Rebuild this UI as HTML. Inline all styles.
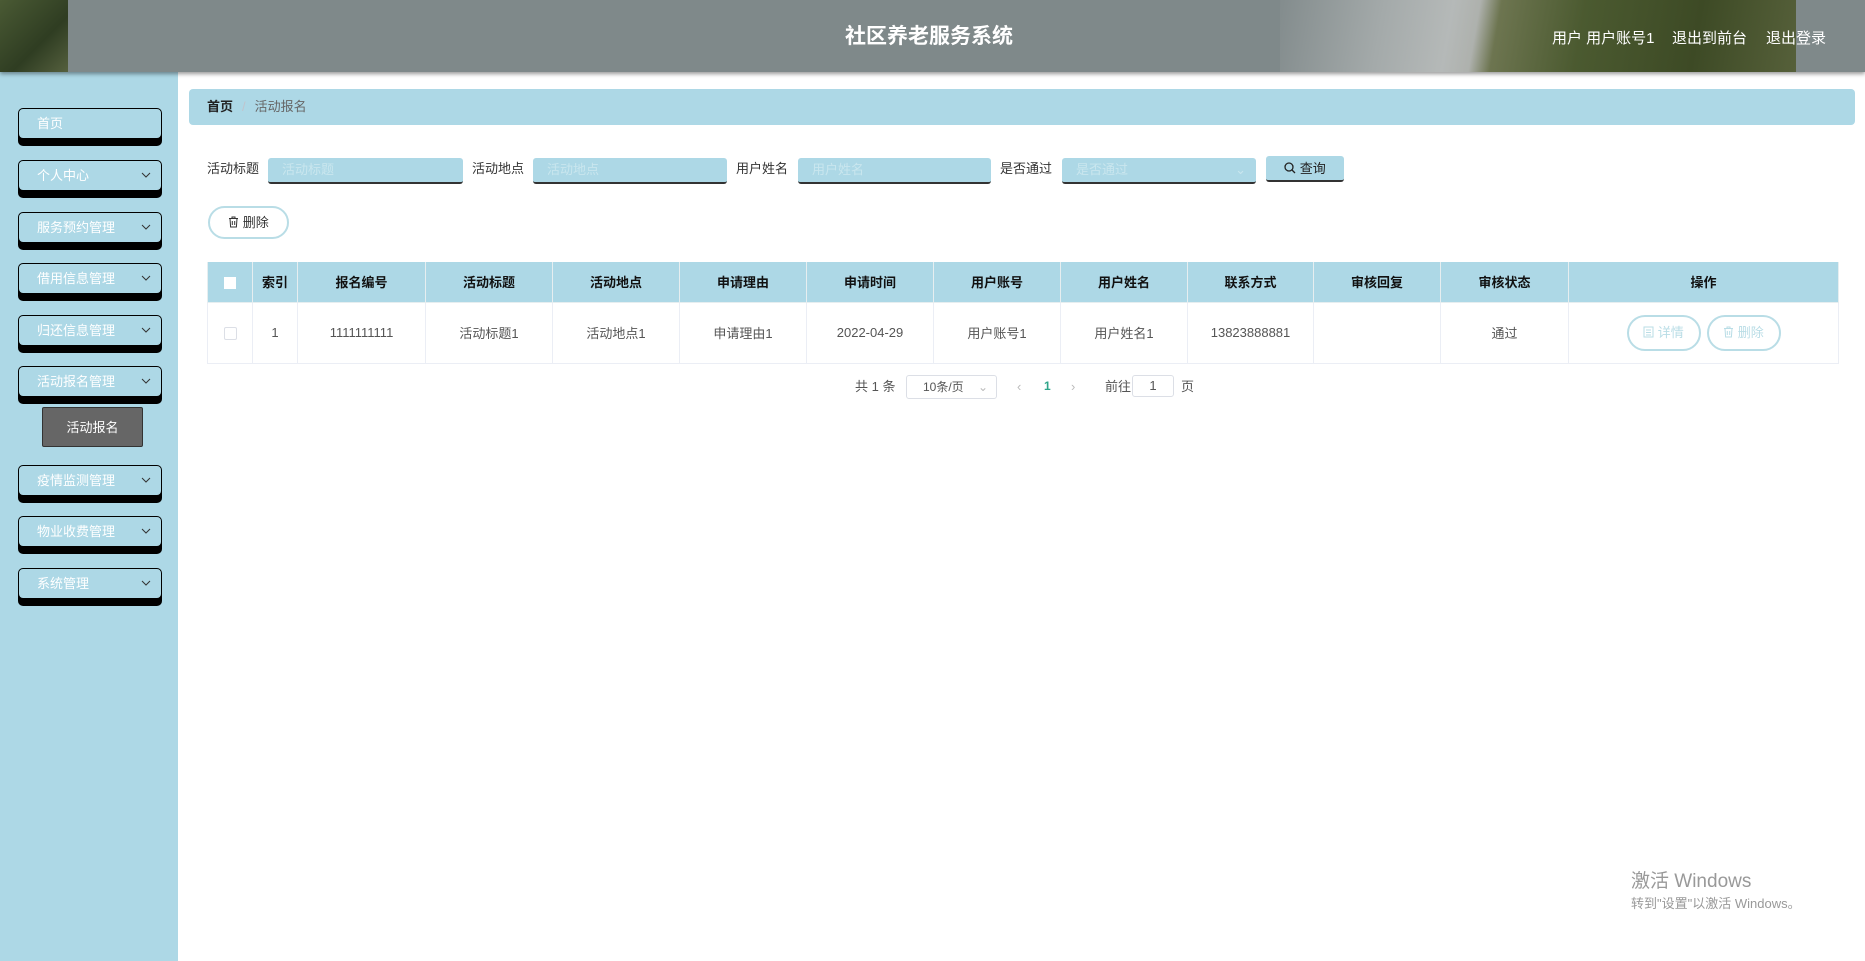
<!DOCTYPE html>
<html><head><meta charset="utf-8"><style>
*{margin:0;padding:0;box-sizing:border-box}
body{width:1865px;height:961px;overflow:hidden;background:#fff;font-family:"Liberation Sans","Noto Sans CJK SC",sans-serif;font-size:14px;color:#333;position:relative}
.hdr{position:absolute;left:0;top:0;width:1865px;height:72px;background:#7f898a;box-shadow:0 2px 4px rgba(0,0,0,.4);overflow:hidden;z-index:2}
.abs{position:absolute}
.side{position:absolute;left:0;top:72px;width:178px;height:889px;background:#add8e6}
.mi{position:absolute;left:18px;width:144px;height:31px;background:#add8e6;border:1px solid #000;border-radius:5px;box-shadow:0 7px 0 #000;color:#fff;font-size:13px;line-height:29px;padding-left:18px}
.mi svg{position:absolute;right:10px;top:11px}
.sub{position:absolute;left:42px;top:407px;width:101px;height:40px;background:#666;color:#fff;font-size:13px;text-align:center;line-height:40px;border:1px solid #333;border-radius:2px}
.bc{position:absolute;left:189px;top:89px;width:1666px;height:36px;background:#add8e6;border-radius:4px;font-size:13px;line-height:36px;padding-left:18px}
.lbl{position:absolute;top:158px;font-size:13px;color:#333}
.inp{position:absolute;top:158px;height:26px;background:#add8e6;border-bottom:2px solid #333;border-radius:3px;color:#c9e6ee;font-size:13px;line-height:24px;padding-left:14px}
.btnq{position:absolute;left:1266px;top:156px;width:78px;height:26px;background:#add8e6;border-bottom:2px solid #333;border-radius:3px;font-size:13px;line-height:25px;text-align:center;color:#222}
.del{position:absolute;left:208px;top:206px;width:81px;height:33px;border:2px solid #b9dde6;border-radius:17px;font-size:13px;line-height:29px;text-align:center;color:#333}
table{position:absolute;left:207px;top:262px;border-collapse:collapse;table-layout:fixed;font-size:13px}
th{background:#add8e6;height:40px;color:#111;font-weight:bold;border:1px solid #e6eef0;border-top:none}
td{height:61px;text-align:center;border:1px solid #ebeef5;color:#555}
.ob{display:inline-block;width:74px;height:36px;border:2px solid #b9dde6;border-radius:18px;color:#b9dde6;line-height:32px;font-size:13px;margin:0 3px}
.pg{position:absolute;top:375px;font-size:13px;color:#555;line-height:23px}
</style></head><body>
<div class="hdr">
 <div class="abs" style="left:0;top:0;width:68px;height:72px;background:linear-gradient(135deg,#4a5a34,#2f3d22 60%,#55603e)"></div>
 <div class="abs" style="left:1280px;top:0;width:516px;height:72px;background:linear-gradient(100deg,#838c8d 0%,#a4aaaa 20%,#b5b9b8 33%,#aeb1ad 38%,#6d7550 42%,#4b5a30 58%,#3d4a25 80%,#56603a 100%)"></div>
 <div class="abs" style="left:845px;top:25px;color:#fff;font-size:21px;font-weight:bold;line-height:24px">社区养老服务系统</div>
 <div class="abs" style="left:1552px;top:27px;color:#fff;font-size:15px">用户 用户账号1</div>
 <div class="abs" style="left:1672px;top:27px;color:#fff;font-size:15px">退出到前台</div>
 <div class="abs" style="left:1766px;top:27px;color:#fff;font-size:15px">退出登录</div>
</div>
<div class="side">
 <div class="mi" style="top:36px">首页</div>
 <div class="mi" style="top:88px">个人中心<svg width="10" height="6"><path d="M1 1l4 4 4-4" stroke="#333" fill="none"/></svg></div>
 <div class="mi" style="top:140px">服务预约管理<svg width="10" height="6"><path d="M1 1l4 4 4-4" stroke="#333" fill="none"/></svg></div>
 <div class="mi" style="top:191px">借用信息管理<svg width="10" height="6"><path d="M1 1l4 4 4-4" stroke="#333" fill="none"/></svg></div>
 <div class="mi" style="top:243px">归还信息管理<svg width="10" height="6"><path d="M1 1l4 4 4-4" stroke="#333" fill="none"/></svg></div>
 <div class="mi" style="top:294px">活动报名管理<svg width="10" height="6"><path d="M1 1l4 4 4-4" stroke="#333" fill="none"/></svg></div>
 <div class="mi" style="top:393px">疫情监测管理<svg width="10" height="6"><path d="M1 1l4 4 4-4" stroke="#333" fill="none"/></svg></div>
 <div class="mi" style="top:444px">物业收费管理<svg width="10" height="6"><path d="M1 1l4 4 4-4" stroke="#333" fill="none"/></svg></div>
 <div class="mi" style="top:496px">系统管理<svg width="10" height="6"><path d="M1 1l4 4 4-4" stroke="#333" fill="none"/></svg></div>
</div>
<div class="sub">活动报名</div>
<div class="bc"><b style="color:#222">首页</b><span style="color:#c0c4cc;margin:0 9px">/</span><span style="color:#666">活动报名</span></div>
<div class="lbl" style="left:207px">活动标题</div><div class="inp" style="left:268px;width:195px">活动标题</div>
<div class="lbl" style="left:472px">活动地点</div><div class="inp" style="left:533px;width:194px">活动地点</div>
<div class="lbl" style="left:736px">用户姓名</div><div class="inp" style="left:798px;width:193px">用户姓名</div>
<div class="lbl" style="left:1000px">是否通过</div><div class="inp" style="left:1062px;width:194px">是否通过<span style="position:absolute;right:10px;color:#c9e6ee">⌄</span></div>
<div class="btnq"><svg width="12" height="12" style="vertical-align:-1px"><circle cx="5" cy="5" r="4" stroke="#222" fill="none" stroke-width="1.3"/><path d="M8 8l3 3" stroke="#222" stroke-width="1.3"/></svg> 查询</div>
<div class="del"><svg width="11" height="12" style="vertical-align:-1px"><path d="M1 2.5h9M4 2.5V1h3v1.5M2 2.5l.6 8.5h5.8l.6-8.5M4.3 5v4M6.7 5v4" stroke="#333" fill="none"/></svg> 删除</div>
<table>
<colgroup><col style="width:45px"><col style="width:45px"><col style="width:128px"><col style="width:127px"><col style="width:127px"><col style="width:127px"><col style="width:127px"><col style="width:127px"><col style="width:127px"><col style="width:126px"><col style="width:127px"><col style="width:128px"><col style="width:270px"></colgroup>
<tr><th><span style="display:inline-block;width:12px;height:12px;background:#fff;vertical-align:middle"></span></th><th>索引</th><th>报名编号</th><th>活动标题</th><th>活动地点</th><th>申请理由</th><th>申请时间</th><th>用户账号</th><th>用户姓名</th><th>联系方式</th><th>审核回复</th><th>审核状态</th><th>操作</th></tr>
<tr><td><span style="display:inline-block;width:13px;height:13px;border:1px solid #dcdfe6;border-radius:2px;vertical-align:middle"></span></td><td>1</td><td>1111111111</td><td>活动标题1</td><td>活动地点1</td><td>申请理由1</td><td>2022-04-29</td><td>用户账号1</td><td>用户姓名1</td><td>13823888881</td><td></td><td>通过</td><td><span class="ob"><svg width="11" height="12" style="vertical-align:-1px"><rect x="1" y="1" width="9" height="10" stroke="#b9dde6" fill="none"/><path d="M3 4h5M3 6.5h5M3 9h5" stroke="#b9dde6"/></svg> 详情</span><span class="ob"><svg width="11" height="12" style="vertical-align:-1px"><path d="M1 2.5h9M4 2.5V1h3v1.5M2 2.5l.6 8.5h5.8l.6-8.5M4.3 5v4M6.7 5v4" stroke="#b9dde6" fill="none"/></svg> 删除</span></td></tr>
</table>
<div class="pg" style="left:855px">共 1 条</div>
<div class="pg" style="left:906px;width:91px;height:24px;border:1px solid #dcdfe6;border-radius:3px;padding-left:16px;font-size:12px">10条/页<span style="position:absolute;right:8px;color:#bbb">⌄</span></div>
<div class="pg" style="left:1017px;color:#bbb">‹</div>
<div class="pg" style="left:1044px;color:#2fa58a;font-weight:bold;font-size:12px">1</div>
<div class="pg" style="left:1071px;color:#bbb">›</div>
<div class="pg" style="left:1105px">前往</div>
<div class="pg" style="left:1132px;width:42px;height:22px;border:1px solid #dcdfe6;border-radius:3px;text-align:center;line-height:20px">1</div>
<div class="pg" style="left:1181px">页</div>
<div class="abs" style="left:1631px;top:866px;color:#999;font-size:19px">激活 Windows</div>
<div class="abs" style="left:1631px;top:893px;color:#999;font-size:13px">转到"设置"以激活 Windows。</div>
</body></html>
